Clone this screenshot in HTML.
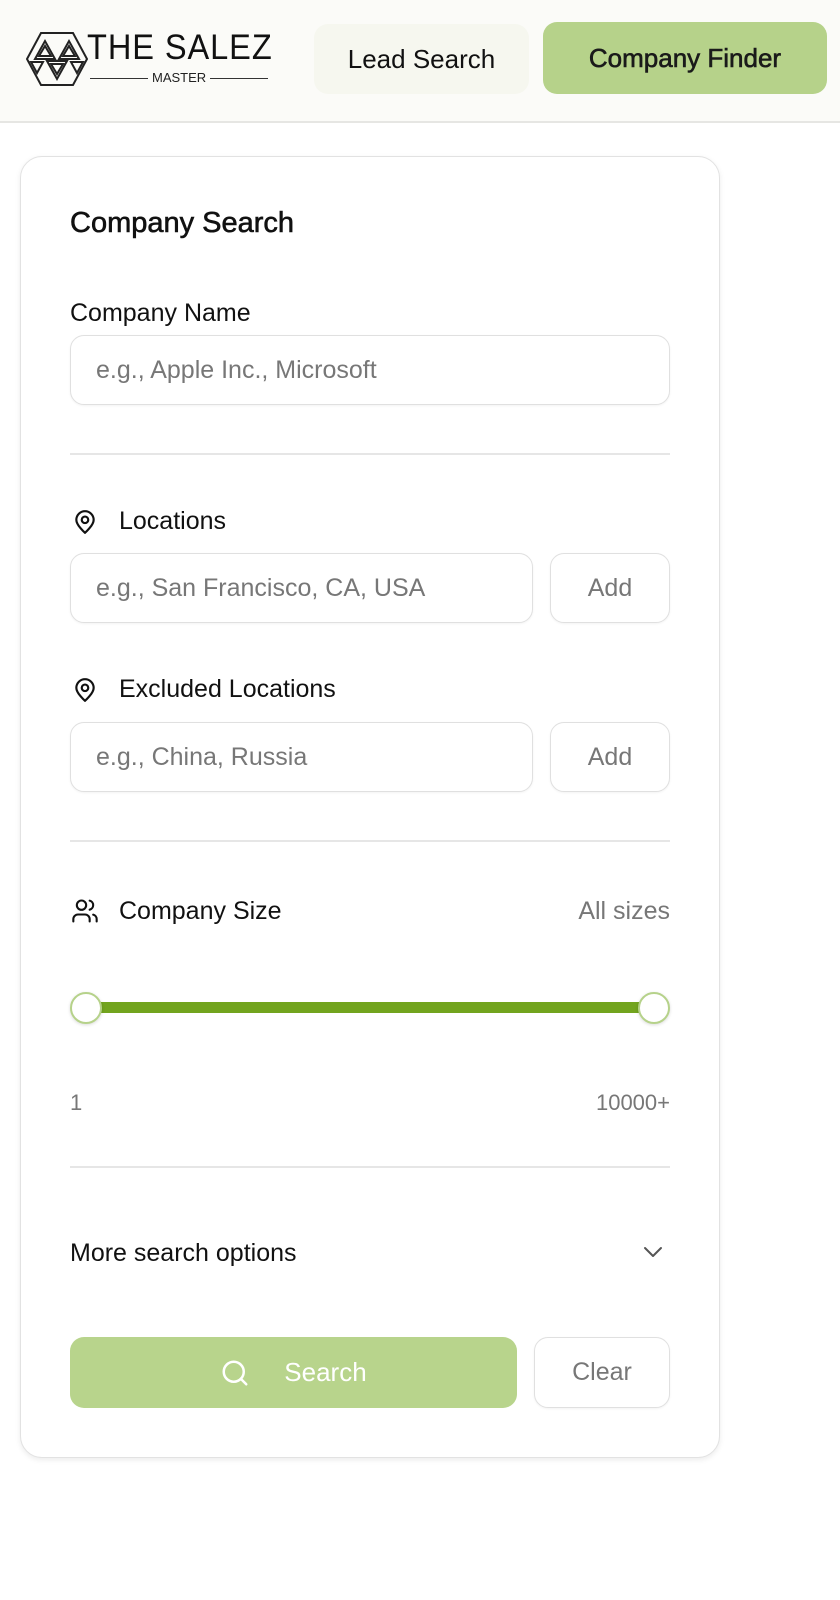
<!DOCTYPE html>
<html><head><meta charset="utf-8"><style>
*{box-sizing:border-box;margin:0;padding:0}
body{width:840px;height:1600px;background:#fff;font-family:"Liberation Sans",Arial,sans-serif;color:#111;position:relative;overflow:hidden}
.hdr{position:absolute;left:0;top:0;width:840px;height:123px;background:#fbfbf8;border-bottom:2px solid #e6e6e3}
.btn{position:absolute;border-radius:14px;font-size:26px;display:flex;align-items:center;justify-content:center}
.card{position:absolute;left:20px;top:156px;width:700px;height:1302px;border:1.5px solid #e2e2e2;border-radius:22px;background:#fff;box-shadow:0 2px 6px rgba(0,0,0,.08)}
.a{position:absolute}
.lbl{position:absolute;font-size:25px;color:#111}
.inp{position:absolute;border:1.5px solid #e0e0e0;border-radius:14px;box-shadow:0 1px 2px rgba(0,0,0,.05);font-size:25px;color:#777;display:flex;align-items:center;padding-left:25px;background:#fff}
.add{justify-content:center;padding:0}
.hr{position:absolute;left:70px;width:600px;height:2px;background:#e6e6e6}
.semi{-webkit-text-stroke:0.6px currentColor}
</style></head><body>
<div class="hdr">
  <svg class="a" style="left:26px;top:32px" width="62" height="54" viewBox="0 0 62 54" fill="none" stroke="#222" stroke-width="2">
    <polygon points="15,1 47,1 61,27 47,53 15,53 1,27"/>
    <polygon points="9,27 19,9 29,27"/><polygon points="13,24 19,14 25,24"/>
    <polygon points="33,27 43,9 53,27"/><polygon points="37,24 43,14 49,24"/>
    <polygon points="21,29 41,29 31,47"/><polygon points="25,32 37,32 31,42"/>
    <polygon points="5,30 17,30 11,41"/><polygon points="45,30 57,30 51,41"/>
  </svg>
  <div class="a" style="left:87px;top:28px;font-size:35px;letter-spacing:1px;color:#111;transform:scaleX(0.93);transform-origin:left">THE SALEZ</div>
  <div class="a" style="left:90px;top:78px;width:178px;height:1px;background:#333"></div>
  <div class="a" style="left:148px;top:70px;background:#fbfbf8;padding:0 4px;font-size:13px;color:#222">MASTER</div>
  <div class="btn" style="left:314px;top:24px;width:215px;height:70px;background:#f6f7ef">Lead Search</div>
  <div class="btn semi" style="left:543px;top:22px;width:284px;height:72px;background:#b6d28a;color:#1a1a1a">Company Finder</div>
</div>
<div class="card"></div>
<div class="a semi" style="left:70px;top:207px;font-size:29px;color:#111">Company Search</div>
<div class="lbl" style="left:70px;top:299px">Company Name</div>
<div class="inp" style="left:70px;top:335px;width:600px;height:70px">e.g., Apple Inc., Microsoft</div>
<div class="hr" style="top:453px"></div>

<svg class="a" style="left:72px;top:509px" width="26" height="26" viewBox="0 0 24 24" fill="none" stroke="#111" stroke-width="2" stroke-linecap="round" stroke-linejoin="round"><path d="M20 10c0 5-8 12-8 12s-8-7-8-12a8 8 0 0 1 16 0z"/><circle cx="12" cy="10" r="3"/></svg>
<div class="lbl" style="left:119px;top:507px">Locations</div>
<div class="inp" style="left:70px;top:553px;width:463px;height:70px">e.g., San Francisco, CA, USA</div>
<div class="inp add" style="left:550px;top:553px;width:120px;height:70px">Add</div>

<svg class="a" style="left:72px;top:677px" width="26" height="26" viewBox="0 0 24 24" fill="none" stroke="#111" stroke-width="2" stroke-linecap="round" stroke-linejoin="round"><path d="M20 10c0 5-8 12-8 12s-8-7-8-12a8 8 0 0 1 16 0z"/><circle cx="12" cy="10" r="3"/></svg>
<div class="lbl" style="left:119px;top:675px">Excluded Locations</div>
<div class="inp" style="left:70px;top:722px;width:463px;height:70px">e.g., China, Russia</div>
<div class="inp add" style="left:550px;top:722px;width:120px;height:70px">Add</div>
<div class="hr" style="top:840px"></div>

<svg class="a" style="left:70px;top:897px" width="30" height="28" viewBox="0 0 24 24" fill="none" stroke="#111" stroke-width="1.8" stroke-linecap="round" stroke-linejoin="round"><path d="M16 21v-2a4 4 0 0 0-4-4H6a4 4 0 0 0-4 4v2"/><circle cx="9" cy="7" r="4"/><path d="M22 21v-2a4 4 0 0 0-3-3.87"/><path d="M16 3.13a4 4 0 0 1 0 7.75"/></svg>
<div class="lbl" style="left:119px;top:897px">Company Size</div>
<div class="lbl" style="left:540px;top:897px;width:130px;text-align:right;color:#777">All sizes</div>

<div class="a" style="left:86px;top:1002px;width:568px;height:11px;background:#72a41e"></div>
<div class="a" style="left:70px;top:992px;width:32px;height:32px;border-radius:50%;background:#fff;border:2px solid #b6d28a;box-shadow:0 1px 3px rgba(0,0,0,.15)"></div>
<div class="a" style="left:638px;top:992px;width:32px;height:32px;border-radius:50%;background:#fff;border:2px solid #b6d28a;box-shadow:0 1px 3px rgba(0,0,0,.15)"></div>
<div class="a" style="left:70px;top:1090px;font-size:22px;color:#777">1</div>
<div class="a" style="left:540px;top:1090px;width:130px;text-align:right;font-size:22px;color:#777">10000+</div>
<div class="hr" style="top:1166px"></div>

<div class="lbl" style="left:70px;top:1239px">More search options</div>
<svg class="a" style="left:642px;top:1245px" width="22" height="14" viewBox="0 0 22 14" fill="none" stroke="#555" stroke-width="2" stroke-linecap="round" stroke-linejoin="round"><path d="M3 3l8 8 8-8"/></svg>

<div class="btn" style="left:70px;top:1337px;width:447px;height:71px;background:#b8d48c;color:#fff;border-radius:14px">
  <svg width="30" height="30" viewBox="0 0 24 24" fill="none" stroke="#fff" stroke-width="2" stroke-linecap="round" style="margin-right:34px"><circle cx="11" cy="11" r="8"/><path d="M21 21l-4.3-4.3"/></svg>Search</div>
<div class="inp add" style="left:534px;top:1337px;width:136px;height:71px">Clear</div>
</body></html>
